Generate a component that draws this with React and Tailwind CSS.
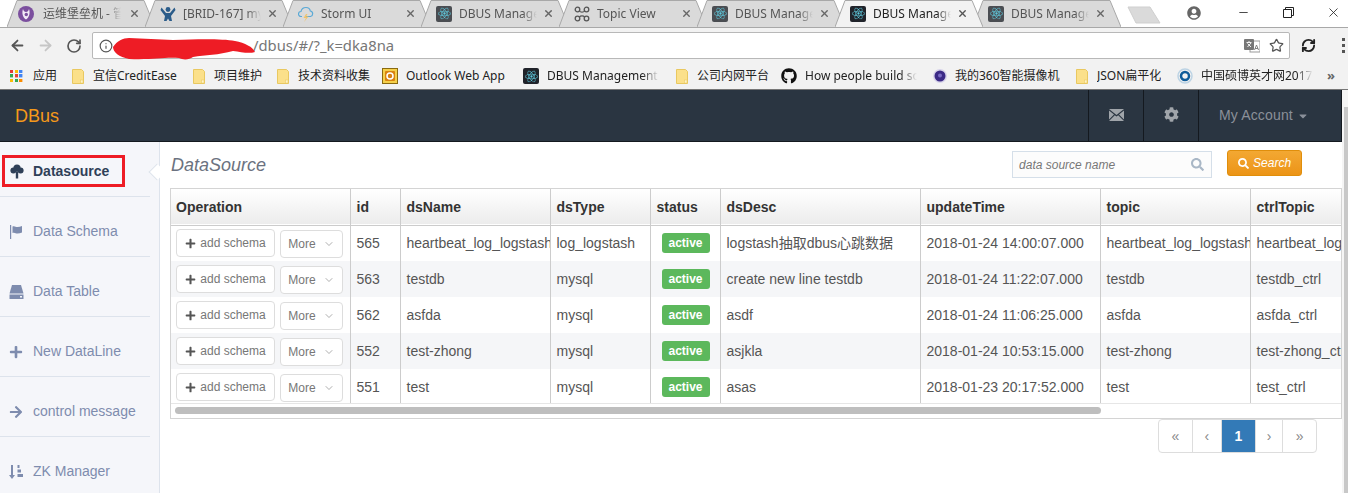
import React from 'react';
import { ArrowLeft, ArrowRight, RotateCw, Info, Star, Minus, X, ChevronDown, RefreshCw } from 'lucide-react';
import { FaReact, FaGithub, FaUserCircle, FaPlus, FaArrowRight, FaCog, FaSearch, FaCaretDown } from 'react-icons/fa';

const sans = "font-['Liberation_Sans','Noto_Sans_CJK_SC',sans-serif]";
const chrome = "font-['Noto_Sans','Noto_Sans_CJK_SC',sans-serif]";

function ReactIcon({ dark }) {
  return (
    <span className={`flex items-center justify-center w-4 h-4 rounded-[2px] shrink-0 ${dark ? 'bg-[#20232a]' : 'bg-[#4a4d52]'}`}>
      <FaReact className="w-[13px] h-[13px] text-[#5fc8dc]" />
    </span>
  );
}

function EyeIcon() {
  return (
    <svg viewBox="0 0 16 16" className="w-4 h-4 shrink-0">
      <circle cx="8" cy="8" r="8" fill="#7b4f9e" />
      <path d="M5 3c-1.500 4 0 9 3 10.500C11 12 12.500 7 11 3c-.5 2-1.500 3-3 3S5.500 5 5 3z" fill="#f1eaf6" />
      <circle cx="8.300" cy="8.500" r="1.700" fill="#7b4f9e" />
    </svg>
  );
}

function JiraIcon() {
  return (
    <svg viewBox="0 0 16 16" className="w-4 h-4 shrink-0">
      <circle cx="8" cy="3.500" r="2.400" fill="#2b5c8a" />
      <path d="M1.500 1.500 6 7h4l4.500-5.500 1 2.500L11 10l1 5H9.500L8 12.500 6.500 15H4l1-5L.5 4z" fill="#2b5c8a" />
    </svg>
  );
}

function StormIcon() {
  return (
    <svg viewBox="0 0 16 16" className="w-4 h-4 shrink-0" fill="none">
      <path d="M4 10.500H3a2.500 2.500 0 0 1 0-5c.5-2.500 2.500-4 5-4 2.200 0 4 1.500 4.300 3.500A2.800 2.800 0 0 1 12.500 10.500H7" stroke="#5aa9d6" strokeWidth="1.200" />
      <path d="M8 8 5.500 12H8l-2 4 4.500-5.500H8L9.500 8z" fill="#f2c46a" />
    </svg>
  );
}

function TopicIcon() {
  return (
    <svg viewBox="0 0 16 16" className="w-4 h-4 shrink-0" fill="none" stroke="#555" strokeWidth="1.300">
      <circle cx="3.500" cy="3.500" r="2.300" />
      <circle cx="12.500" cy="3.500" r="2.300" />
      <circle cx="3.500" cy="12.500" r="2.300" />
      <circle cx="12.500" cy="12.500" r="2.300" />
      <path d="M5.500 5c1 1.500 4 1.500 5 0M5.500 11c1-1.500 4-1.500 5 0" />
    </svg>
  );
}

function FolderIcon() {
  return (
    <svg viewBox="0 0 12 15" className="w-3 h-[15px] shrink-0 mr-px">
      <path d="M.5.500h9l2 2v12H.5z" fill="#fbe08a" stroke="#e9c860" />
      <rect x="8.500" y="11" width="2.500" height="3" fill="#fff3c4" stroke="#e9c860" strokeWidth=".5" />
    </svg>
  );
}

function AppsIcon() {
  const colors = ['#e53935', '#fbbc05', '#4285f4', '#34a853', '#ea4335', '#4285f4', '#fbbc05', '#34a853', '#fb8c00'];
  return (
    <span className="grid grid-cols-3 gap-px w-[13px] h-[13px] shrink-0 mr-[2px]">
      {colors.map((c, i) => (
        <svg key={i} viewBox="0 0 3 3" className="w-[3.400px] h-[3.400px]"><rect width="3" height="3" fill={c} /></svg>
      ))}
    </span>
  );
}

function OutlookIcon() {
  return (
    <svg viewBox="0 0 16 16" className="w-4 h-4 shrink-0">
      <rect x=".5" y=".5" width="15" height="15" fill="#f5d04a" stroke="#8a6a10" />
      <rect x="3" y="3" width="10" height="10" rx="1" fill="#d9820f" />
      <circle cx="8" cy="8" r="3" fill="none" stroke="#fff" strokeWidth="1.500" />
    </svg>
  );
}

function CameraIcon() {
  return (
    <svg viewBox="0 0 16 16" className="w-4 h-4 shrink-0 -mr-px">
      <circle cx="8" cy="8" r="7" fill="#d8d4ea" />
      <circle cx="8" cy="8" r="5.500" fill="#3b2a86" />
      <circle cx="8" cy="7.500" r="2" fill="#7a6bc4" />
    </svg>
  );
}

function BoIcon() {
  return (
    <svg viewBox="0 0 16 16" className="w-4 h-4 shrink-0" fill="none">
      <circle cx="8" cy="8" r="7" stroke="#bcd3e4" strokeWidth="1.500" />
      <circle cx="8" cy="8" r="4" stroke="#0f5c9a" strokeWidth="2.500" />
    </svg>
  );
}

function TranslateIcon() {
  return (
    <svg viewBox="0 0 16 16" className="w-4 h-4">
      <rect x="6" y="3" width="10" height="11" fill="#fff" stroke="#999" />
      <rect x="0" y="1" width="10" height="11" rx="1" fill="#777" />
      <path d="M5 3v1M2.500 4.500h5M3.500 9 7 5M3.500 5.500 7 9" stroke="#fff" strokeWidth=".9" fill="none" />
      <path d="M10.500 12l2-5 2 5M11 10.500h3" stroke="#777" strokeWidth=".9" fill="none" />
    </svg>
  );
}

// Glyphicon tree-deciduous
function TreeIcon() {
  return (
    <svg viewBox="0 0 14 14" className="w-[14px] h-[15px] shrink-0" fill="#2f4058">
      <circle cx="7" cy="3.600" r="3.600" />
      <circle cx="3.400" cy="6" r="3" />
      <circle cx="10.600" cy="6" r="3" />
      <path d="M5.800 7h2.400v7H5.800z" />
    </svg>
  );
}

// Glyphicon flag
function FlagIcon() {
  return (
    <svg viewBox="0 0 14 14" className="w-[14px] h-[14px] shrink-0" fill="#7e8cae">
      <path d="M1 0h1.200v14H1z" />
      <path d="M3.500 1.500c2-1 3 .5 5 .5 1.500 0 3-.5 4.500-1v6.500c-1.500.5-3 1-4.500 1-2 0-3-1.500-5-.5z" />
    </svg>
  );
}

// Glyphicon hdd
function HddIcon() {
  return (
    <svg viewBox="0 0 15 14" className="w-[15px] h-[14px] shrink-0" fill="#7e8cae">
      <path d="M3 0h9l2.500 8.500H.5z" />
      <path d="M.5 9.500h14V14H.5zM11 11v1.500h2V11z" fillRule="evenodd" />
    </svg>
  );
}

// Glyphicon sort-by-attributes
function SortIcon() {
  return (
    <svg viewBox="0 0 14 14" className="w-[14px] h-[14px] shrink-0" fill="#7e8cae">
      <path d="M2 0h2v10h2L3 14 0 10h2z" />
      <path d="M8.500 0h2v3h-2zM8.500 4.500h3.500v3H8.500zM8.500 9H14v3H8.500z" />
    </svg>
  );
}

// Glyphicon envelope
function MailIcon() {
  return (
    <svg viewBox="0 0 15 12" className="w-[15px] h-[12px] -mt-px" fill="#a0a5aa">
      <path d="M0 0h15L7.500 6z" />
      <path d="M0 1.500 5 5.500 0 10.500zM15 1.500 10 5.500 15 10.500zM5.800 6.200 7.500 7.500 9.200 6.200 15 12H0z" />
    </svg>
  );
}

const tabs = [
  { icon: <span className="-ml-1 mr-[2px]"><EyeIcon /></span>, title: '运维堡垒机 - 管理' },
  { icon: <JiraIcon />, title: '[BRID-167] mysql' },
  { icon: <StormIcon />, title: 'Storm UI' },
  { icon: <ReactIcon />, title: 'DBUS Management' },
  { icon: <TopicIcon />, title: 'Topic View' },
  { icon: <ReactIcon />, title: 'DBUS Management' },
  { icon: <ReactIcon dark />, title: 'DBUS Management', active: true },
  { icon: <ReactIcon />, title: 'DBUS Management' },
];

function Tab({ icon, title, active }) {
  return (
    <div className={`relative w-[148px] h-[27px] -mr-[10px] shrink-0 pl-[15px] flex items-center ${active ? 'z-10 text-[#222]' : 'text-[#555]'}`}>
      <svg viewBox="0 0 148 27" className="absolute inset-0 w-full h-full" preserveAspectRatio="none">
        <path d="M0 27 10 .5H137L148 27" fill={active ? '#f2f2f2' : '#dadada'} stroke="#a8a8a8" />
      </svg>
      <span className="relative flex items-center gap-[7px]">
        {icon}
        <span className="whitespace-nowrap overflow-hidden w-[78px] text-[12px] [mask-image:linear-gradient(to_right,black_82%,transparent)]">{title}</span>
      </span>
      <X className={`absolute left-[122px] top-[8px] w-[11px] h-[11px] ${active ? 'text-[#555]' : 'text-[#666]'}`} strokeWidth={3} />
    </div>
  );
}

const bookmarks = [
  { icon: <AppsIcon />, label: '应用', w: 'w-[62px]' },
  { icon: <FolderIcon />, label: '宜信CreditEase', w: 'w-[121px]' },
  { icon: <FolderIcon />, label: '项目维护', w: 'w-[84px]' },
  { icon: <FolderIcon />, label: '技术资料收集', w: 'w-[105px]' },
  { icon: <OutlookIcon />, label: 'Outlook Web App', w: 'w-[141px]' },
  { icon: <ReactIcon dark />, label: 'DBUS Management', w: 'w-[153px]', fade: true },
  { icon: <FolderIcon />, label: '公司内网平台', w: 'w-[105px]' },
  { icon: <FaGithub className="w-4 h-4 shrink-0 text-[#111]" />, label: 'How people build software', w: 'w-[151px]', fade: true },
  { icon: <CameraIcon />, label: '我的360智能摄像机', w: 'w-[144px]' },
  { icon: <FolderIcon />, label: 'JSON扁平化', w: 'w-[101px]' },
  { icon: <BoIcon />, label: '中国硕博英才网2017年', w: 'w-[150px]', fade: true },
];

function Bookmark({ icon, label, w, fade }) {
  return (
    <div className={`flex items-center gap-2 shrink-0 ${w}`}>
      {icon}
      <span className={`whitespace-nowrap overflow-hidden text-[12px] text-[#222] ${fade ? 'w-[112px] [mask-image:linear-gradient(to_right,black_85%,transparent)]' : ''}`}>{label}</span>
    </div>
  );
}

function BrowserChrome() {
  return (
    <div className={chrome}>
      <div className="relative h-[28px] bg-white flex pl-[7px] border-b border-[#a8a8a8]">
        {tabs.map((t, i) => <Tab key={i} {...t} />)}
        <svg viewBox="0 0 34 18" className="w-[34px] h-[18px] mt-[6px] ml-[16px] shrink-0">
          <path d="M1 1h22l10 16H9z" fill="#dadada" stroke="#cfcfcf" />
        </svg>
        <FaUserCircle className="absolute left-[1187px] top-[6px] w-[14px] h-[14px] text-[#666]" />
        <Minus className="absolute left-[1237px] top-[6px] w-[13px] h-[13px] text-[#222]" strokeWidth={1.500} />
        <svg viewBox="0 0 11 11" className="absolute left-[1283px] top-[7px] w-[11px] h-[11px]" fill="none" stroke="#222">
          <path d="M.5 2.500h8v8h-8zM2.500 2.500v-2h8v8h-2" />
        </svg>
        <X className="absolute left-[1326px] top-[5px] w-[15px] h-[15px] text-[#222]" strokeWidth={1.300} />
      </div>
      <div className="h-[35px] bg-[#f2f2f2] flex items-center pl-[9px]">
        <ArrowLeft className="w-[17px] h-[17px] text-[#555]" strokeWidth={2.500} />
        <ArrowRight className="w-[17px] h-[17px] ml-[11px] text-[#c6c6c6]" strokeWidth={2.500} />
        <RotateCw className="w-[16px] h-[16px] ml-[12px] text-[#555]" strokeWidth={2.500} />
        <div className="relative ml-[10px] w-[1198px] h-[27px] bg-white border border-[#b8b8b8] rounded-[2px] flex items-center">
          <Info className="w-[14px] h-[14px] ml-[6px] text-[#555]" strokeWidth={2} />
          <span className="ml-[140px] text-[14.800px] text-[#777] whitespace-nowrap">/dbus/#/?_k=dka8na</span>
          <svg viewBox="0 0 144 24" className="absolute left-[20px] top-[4px] w-[144px] h-[24px]">
            <path d="M0 10C4 4 10 1 16 1L60 3C90 2 110 2 122 4 132 6 140 10 142 15 136 17 128 15 120 14 106 18 92 18 80 20 76 23 70 23 66 21 50 20 40 23 16 22 6 20 0 15 0 10z" fill="#ee1c25" />
          </svg>
          <div className="ml-auto flex items-center gap-[9px] mr-[5px]">
            <TranslateIcon />
            <Star className="w-[15px] h-[15px] text-[#555]" strokeWidth={2} />
          </div>
        </div>
        <RefreshCw className="w-[15px] h-[15px] ml-[11px] text-[#222]" strokeWidth={3} />
        <div className="ml-[26px] flex flex-col gap-[3px]">
          <span className="w-[3px] h-[3px] bg-[#555]" />
          <span className="w-[3px] h-[3px] bg-[#555]" />
          <span className="w-[3px] h-[3px] bg-[#555]" />
        </div>
      </div>
      <div className="h-[27px] bg-[#f2f2f2] flex items-center pl-[10px] border-b border-[#777] relative">
        {bookmarks.map((b, i) => <Bookmark key={i} {...b} />)}
        <span className="absolute left-[1327px] top-[3px] text-[13px] font-bold text-[#666]">»</span>
      </div>
    </div>
  );
}

function TopNav() {
  return (
    <div className="h-[52px] bg-[#2a3541] w-[1342px] flex items-stretch border-b border-r border-[#14191f]">
      <span className="text-[18px] text-[#f5991a] leading-[52px] pl-[15px]">DBus</span>
      <div className="ml-auto flex">
        <div className="w-[55px] border-l border-[#14191f] flex items-center justify-center">
          <MailIcon />
        </div>
        <div className="w-[55px] border-l border-[#14191f] flex items-center justify-center">
          <FaCog className="w-[15px] h-[15px] text-[#a0a5aa] -mt-[2px]" />
        </div>
        <div className="w-[143px] border-l border-[#14191f] flex items-center pl-5 text-[14px] tracking-[0.15px] text-[#8a9099]">
          My Account <FaCaretDown className="w-[12px] h-[12px] ml-1" />
        </div>
      </div>
    </div>
  );
}

const sideItems = [
  { icon: <FlagIcon />, label: 'Data Schema' },
  { icon: <HddIcon />, label: 'Data Table' },
  { icon: <FaPlus className="w-[14px] h-[14px] shrink-0" />, label: 'New DataLine' },
  { icon: <FaArrowRight className="w-[14px] h-[14px] shrink-0" />, label: 'control message' },
  { icon: <SortIcon />, label: 'ZK Manager' },
];

function Sidebar() {
  return (
    <aside className="relative w-[160px] shrink-0 bg-[#f5f6fa] border-r border-[#dde3ec] h-[351px]">
      <div className="h-[55px] w-[150px] pt-[13px] pl-[2px] border-b border-[#dde3ec]">
        <div className="w-[123px] h-[32px] border-[3px] border-[#ee1c25] flex items-center gap-[9px] pl-[5px] text-[14px] font-bold text-[#2f4058]">
          <TreeIcon />
          Datasource
        </div>
      </div>
      {sideItems.map((item, i) => (
        <div key={item.label} className={`h-[60px] w-[150px] pt-[10px] flex items-center gap-[9px] pl-[9px] text-[14px] text-[#7e8cae] border-b ${i < 4 ? 'border-[#dde3ec]' : 'border-transparent'}`}>
          <span className="w-[15px] flex shrink-0">{item.icon}</span>
          {item.label}
        </div>
      ))}
      <span className="absolute left-[151px] top-[24px] w-[12px] h-[12px] rotate-45 bg-white border-l border-b border-[#dde3ec]" />
    </aside>
  );
}

const columns = [
  { label: 'Operation', w: 'w-[179px]' },
  { label: 'id', w: 'w-[50px]' },
  { label: 'dsName', w: 'w-[150px]' },
  { label: 'dsType', w: 'w-[100px]' },
  { label: 'status', w: 'w-[70px]' },
  { label: 'dsDesc', w: 'w-[200px]' },
  { label: 'updateTime', w: 'w-[180px]' },
  { label: 'topic', w: 'w-[150px]' },
  { label: 'ctrlTopic', w: 'w-[150px]' },
];

const rows = [
  { id: 565, name: 'heartbeat_log_logstash', type: 'log_logstash', desc: 'logstash抽取dbus心跳数据', time: '2018-01-24 14:00:07.000', topic: 'heartbeat_log_logstash', ctrl: 'heartbeat_log_logstash_ctrl' },
  { id: 563, name: 'testdb', type: 'mysql', desc: 'create new line testdb', time: '2018-01-24 11:22:07.000', topic: 'testdb', ctrl: 'testdb_ctrl' },
  { id: 562, name: 'asfda', type: 'mysql', desc: 'asdf', time: '2018-01-24 11:06:25.000', topic: 'asfda', ctrl: 'asfda_ctrl' },
  { id: 552, name: 'test-zhong', type: 'mysql', desc: 'asjkla', time: '2018-01-24 10:53:15.000', topic: 'test-zhong', ctrl: 'test-zhong_ctrl' },
  { id: 551, name: 'test', type: 'mysql', desc: 'asas', time: '2018-01-23 20:17:52.000', topic: 'test', ctrl: 'test_ctrl' },
];

const cell = 'border-l border-[#ccc] first:border-l-0 pl-[6px] first:pl-[5px] overflow-hidden whitespace-nowrap text-left';

function DataTable() {
  return (
    <div className="border border-[#d4d4d4] h-[231px] w-[1172px] overflow-hidden relative">
      <div className="h-[214px] overflow-hidden">
        <table className="table-fixed border-collapse w-[1229px] text-[14px]">
          <thead>
            <tr className="h-[36px] bg-gradient-to-b from-white to-[#ececec] border-b border-[#ccc]">
              {columns.map((c) => (
                <th key={c.label} className={`${cell} ${c.w} pt-[2px] font-bold text-[#333]`}>{c.label}</th>
              ))}
            </tr>
          </thead>
          <tbody>
            {rows.map((r, i) => (
              <tr key={r.id} className={`h-[36px] text-[#555] ${i % 2 ? 'bg-[#f5f6f8]' : 'bg-white'}`}>
                <td className={cell}>
                  <div className="flex items-center gap-[5px]">
                    <button className="w-[99px] h-[28px] border border-[#ddd] rounded-[4px] bg-white flex items-center justify-center gap-[4px] text-[12px] text-[#777]">
                      <FaPlus className="w-[11px] h-[11px] text-[#555]" /> add schema
                    </button>
                    <button className="w-[63px] h-[28px] mt-px border border-[#ddd] rounded-[4px] bg-white flex items-center justify-center gap-[7px] text-[12px] text-[#777]">
                      More <ChevronDown className="w-[12px] h-[12px]" strokeWidth={1.200} />
                    </button>
                  </div>
                </td>
                <td className={cell}>{r.id}</td>
                <td className={cell}>{r.name}</td>
                <td className={cell}>{r.type}</td>
                <td className={cell}>
                  <span className="block ml-[5px] w-[48px] h-[20px] leading-[20px] text-center rounded-[3px] bg-[#5cb85c] text-white text-[12px] font-bold">active</span>
                </td>
                <td className={cell}>{r.desc}</td>
                <td className={cell}>{r.time}</td>
                <td className={cell}>{r.topic}</td>
                <td className={cell}>{r.ctrl}</td>
              </tr>
            ))}
          </tbody>
        </table>
      </div>
      <div className="h-[16px] bg-white border-t border-[#e6e6e6] pl-[4px] pt-[3px]">
        <div className="w-[926px] h-[7px] rounded-full bg-[#bebebe]" />
      </div>
    </div>
  );
}

const pages = [
  { label: '«', w: 'w-[33px]' },
  { label: '‹', w: 'w-[30px]' },
  { label: '1', w: 'w-[34px]', active: true },
  { label: '›', w: 'w-[28px]' },
  { label: '»', w: 'w-[34px]' },
];

function Pagination() {
  return (
    <div className="flex h-[34px] w-[159px] ml-[988px] border border-[#ddd] rounded-[4px] overflow-hidden">
      {pages.map((p, i) => (
        <span key={i} className={`${p.w} flex items-center justify-center text-[14px] ${i ? 'border-l border-[#ddd]' : ''} ${p.active ? 'bg-[#337ab7] text-white font-bold' : 'text-[#888]'}`}>{p.label}</span>
      ))}
    </div>
  );
}

function Content() {
  return (
    <main className="flex-1 bg-white pl-[10px]">
      <div className="h-[46px] flex items-start">
        <h1 className="italic text-[18px] text-[#6b7280] mt-[13px] ml-px leading-[20px]">DataSource</h1>
        <div className="ml-[746px] mt-[9px] w-[200px] h-[27px] border border-[#d5dfe9] bg-[#fcfcfc] flex items-center pl-[6px] pr-[7px] italic text-[12px] text-[#777]">
          data source name
          <FaSearch className="ml-auto w-[13px] h-[13px] text-[#a9b7c6]" />
        </div>
        <button className="ml-[15px] mt-[8px] w-[75px] h-[26px] rounded-[3px] border border-[#e08e0b] bg-gradient-to-b from-[#f3a832] to-[#ec9415] flex items-center justify-center gap-[4px] italic text-[12px] text-white">
          <FaSearch className="w-[11px] h-[11px]" /> Search
        </button>
      </div>
      <DataTable />
      <Pagination />
    </main>
  );
}

export default function App() {
  return (
    <div className="w-[1348px] h-[493px] overflow-hidden bg-white relative">
      <BrowserChrome />
      <div className={sans}>
        <TopNav />
        <div className="flex w-[1342px]">
          <Sidebar />
          <Content />
        </div>
      </div>
      <div className="absolute right-0 top-[90px] bottom-0 w-[6px] bg-[#f5f5f5]">
        <div className="ml-[2px] mt-[17px] h-[400px] bg-[#c8c8c8]" />
      </div>
    </div>
  );
}
